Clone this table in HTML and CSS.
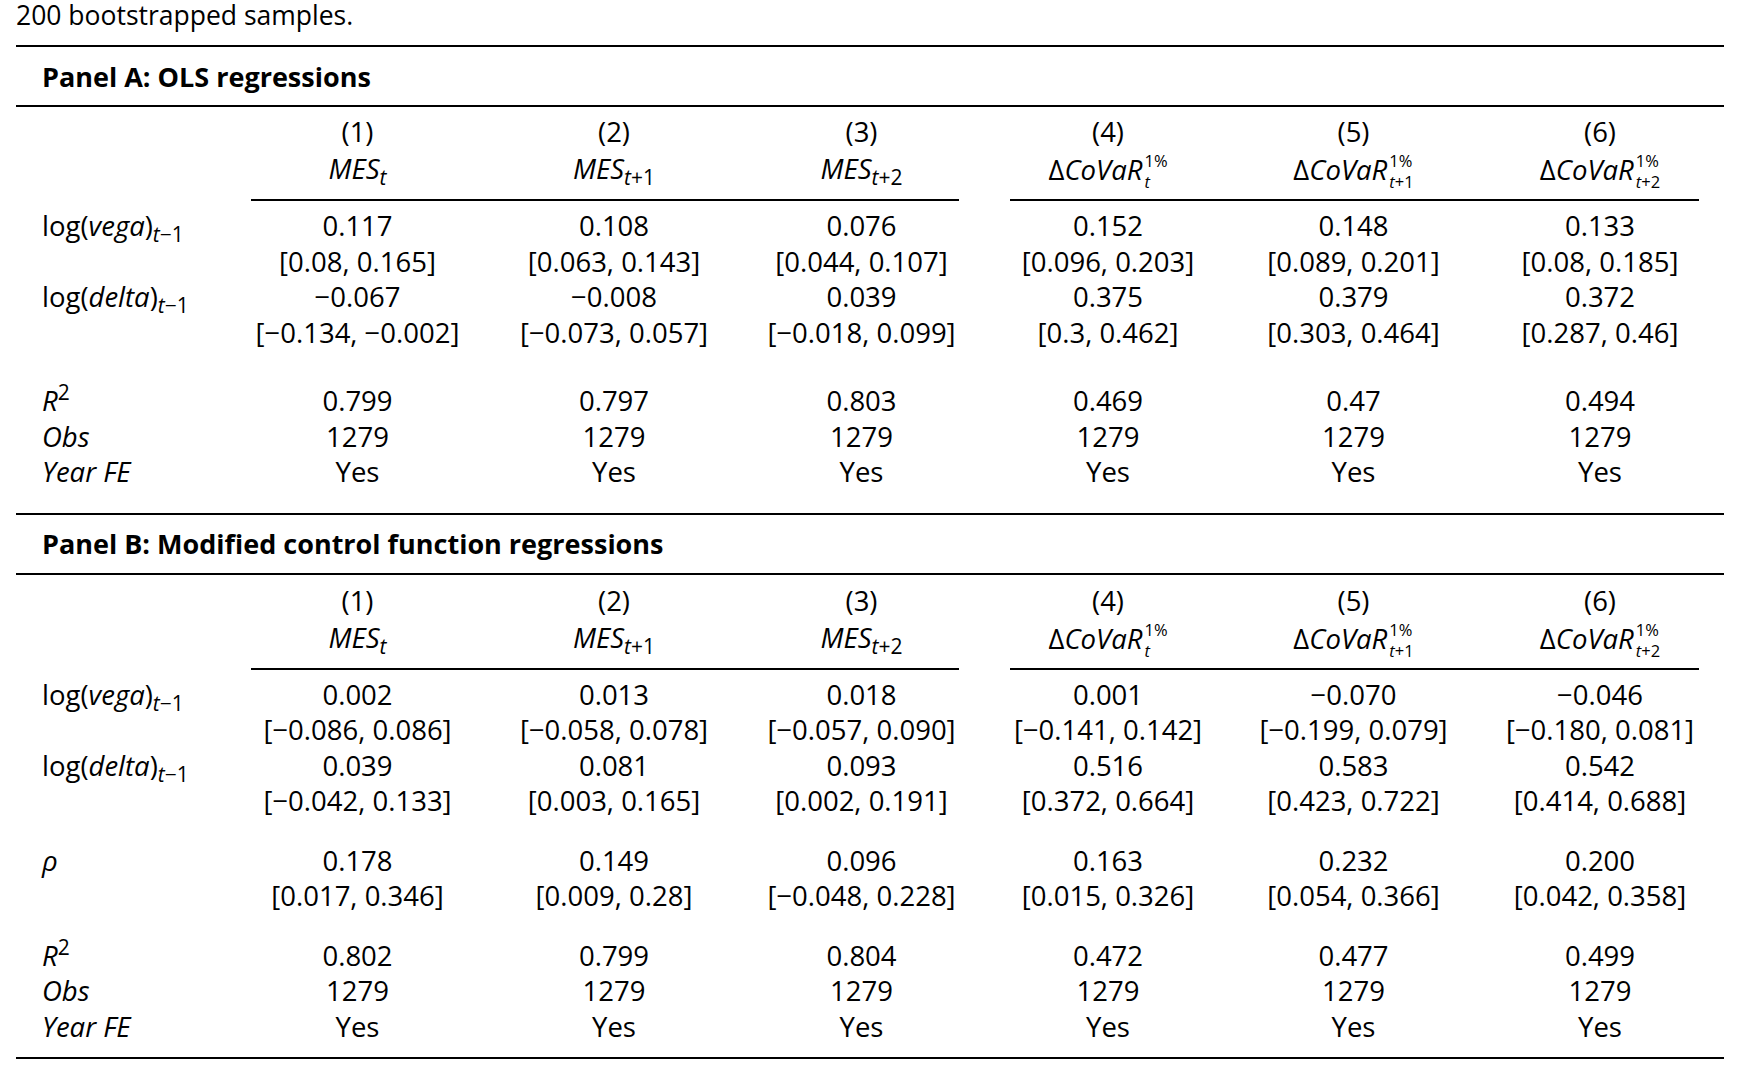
FILE: index.html
```html
<!DOCTYPE html>
<html lang="en">
<head>
  <meta charset="UTF-8" />
  <title>Bootstrapped regressions</title>
  <link rel="stylesheet" href="styles.css">
</head>
<body>

<p class="caption">200 bootstrapped samples.</p>

<div class="table">

  <div class="panel">Panel A: OLS regressions</div>
  <div class="block block-a">
    <div class="row head">
      <span></span><span>(1)</span><span>(2)</span><span>(3)</span><span>(4)</span><span>(5)</span><span>(6)</span>
    </div>
    <div class="row head head2">
      <span></span>
      <span><i>MES</i><sub><i>t</i></sub></span>
      <span><i>MES</i><sub><i>t</i>+1</sub></span>
      <span><i>MES</i><sub><i>t</i>+2</sub></span>
      <span>Δ<i>CoVaR</i><span class="ss"><span>1%</span><span><i>t</i></span></span></span>
      <span>Δ<i>CoVaR</i><span class="ss"><span>1%</span><span><i>t</i>+1</span></span></span>
      <span>Δ<i>CoVaR</i><span class="ss"><span>1%</span><span><i>t</i>+2</span></span></span>
    </div>
    <div class="cmid"><span class="g1"></span><span class="g2"></span></div>

    <div class="row first">
      <span class="lbl">log(<i>vega</i>)<sub><i>t</i>−1</sub></span>
      <span>0.117</span><span>0.108</span><span>0.076</span><span>0.152</span><span>0.148</span><span>0.133</span>
    </div>
    <div class="row">
      <span></span>
      <span>[0.08, 0.165]</span><span>[0.063, 0.143]</span><span>[0.044, 0.107]</span><span>[0.096, 0.203]</span><span>[0.089, 0.201]</span><span>[0.08, 0.185]</span>
    </div>
    <div class="row">
      <span class="lbl">log(<i>delta</i>)<sub><i>t</i>−1</sub></span>
      <span>−0.067</span><span>−0.008</span><span>0.039</span><span>0.375</span><span>0.379</span><span>0.372</span>
    </div>
    <div class="row">
      <span></span>
      <span>[−0.134, −0.002]</span><span>[−0.073, 0.057]</span><span>[−0.018, 0.099]</span><span>[0.3, 0.462]</span><span>[0.303, 0.464]</span><span>[0.287, 0.46]</span>
    </div>

    <div class="gap-a"></div>
    <div class="row">
      <span class="lbl"><i>R</i><sup>2</sup></span>
      <span>0.799</span><span>0.797</span><span>0.803</span><span>0.469</span><span>0.47</span><span>0.494</span>
    </div>
    <div class="row">
      <span class="lbl"><i>Obs</i></span>
      <span>1279</span><span>1279</span><span>1279</span><span>1279</span><span>1279</span><span>1279</span>
    </div>
    <div class="row">
      <span class="lbl"><i>Year FE</i></span>
      <span>Yes</span><span>Yes</span><span>Yes</span><span>Yes</span><span>Yes</span><span>Yes</span>
    </div>
  </div>

  <div class="panel">Panel B: Modified control function regressions</div>
  <div class="block block-b">
    <div class="row head">
      <span></span><span>(1)</span><span>(2)</span><span>(3)</span><span>(4)</span><span>(5)</span><span>(6)</span>
    </div>
    <div class="row head head2">
      <span></span>
      <span><i>MES</i><sub><i>t</i></sub></span>
      <span><i>MES</i><sub><i>t</i>+1</sub></span>
      <span><i>MES</i><sub><i>t</i>+2</sub></span>
      <span>Δ<i>CoVaR</i><span class="ss"><span>1%</span><span><i>t</i></span></span></span>
      <span>Δ<i>CoVaR</i><span class="ss"><span>1%</span><span><i>t</i>+1</span></span></span>
      <span>Δ<i>CoVaR</i><span class="ss"><span>1%</span><span><i>t</i>+2</span></span></span>
    </div>
    <div class="cmid"><span class="g1"></span><span class="g2"></span></div>

    <div class="row first">
      <span class="lbl">log(<i>vega</i>)<sub><i>t</i>−1</sub></span>
      <span>0.002</span><span>0.013</span><span>0.018</span><span>0.001</span><span>−0.070</span><span>−0.046</span>
    </div>
    <div class="row">
      <span></span>
      <span>[−0.086, 0.086]</span><span>[−0.058, 0.078]</span><span>[−0.057, 0.090]</span><span>[−0.141, 0.142]</span><span>[−0.199, 0.079]</span><span>[−0.180, 0.081]</span>
    </div>
    <div class="row">
      <span class="lbl">log(<i>delta</i>)<sub><i>t</i>−1</sub></span>
      <span>0.039</span><span>0.081</span><span>0.093</span><span>0.516</span><span>0.583</span><span>0.542</span>
    </div>
    <div class="row">
      <span></span>
      <span>[−0.042, 0.133]</span><span>[0.003, 0.165]</span><span>[0.002, 0.191]</span><span>[0.372, 0.664]</span><span>[0.423, 0.722]</span><span>[0.414, 0.688]</span>
    </div>

    <div class="gap-b"></div>
    <div class="row">
      <span class="lbl"><i>ρ</i></span>
      <span>0.178</span><span>0.149</span><span>0.096</span><span>0.163</span><span>0.232</span><span>0.200</span>
    </div>
    <div class="row">
      <span></span>
      <span>[0.017, 0.346]</span><span>[0.009, 0.28]</span><span>[−0.048, 0.228]</span><span>[0.015, 0.326]</span><span>[0.054, 0.366]</span><span>[0.042, 0.358]</span>
    </div>

    <div class="gap-b"></div>
    <div class="row">
      <span class="lbl"><i>R</i><sup>2</sup></span>
      <span>0.802</span><span>0.799</span><span>0.804</span><span>0.472</span><span>0.477</span><span>0.499</span>
    </div>
    <div class="row">
      <span class="lbl"><i>Obs</i></span>
      <span>1279</span><span>1279</span><span>1279</span><span>1279</span><span>1279</span><span>1279</span>
    </div>
    <div class="row">
      <span class="lbl"><i>Year FE</i></span>
      <span>Yes</span><span>Yes</span><span>Yes</span><span>Yes</span><span>Yes</span><span>Yes</span>
    </div>
  </div>

</div>

</body>
</html>
```

FILE: styles.css
```css
body {
  margin: 0;
  font-family: "Open Sans", "Noto Sans", sans-serif;
  font-size: 27.5px;
  color: #000;
  background-color: #fff;
}
.caption {
  margin: 0;
  padding-left: 16px;
  font-size: 26.5px;
  line-height: 31px;
}
.table {
  margin: 14px 17px 0 16px;
  border-top: 2px solid #000;
  border-bottom: 2px solid #000;
}
.panel {
  height: 58px;
  display: flex;
  align-items: center;
  padding-left: 26px;
  font-size: 27px;
  font-weight: bold;
  border-bottom: 2px solid #000;
}
.block-a {
  padding: 7px 0 23px;
  border-bottom: 2px solid #000;
}
.block-b {
  padding: 8px 0 13px;
}
.row,
.cmid {
  display: grid;
  grid-template-columns: 235px 213px 300px 195px 51px 196px 295px 198px 25px;
}
.row {
  height: 35.5px;
  line-height: 35.5px;
  text-align: center;
  white-space: nowrap;
}
.row > :nth-child(5) {
  grid-column: 6;
}
.row .lbl {
  text-align: left;
  padding-left: 26px;
}
.head {
  height: 36px;
  line-height: 36px;
}
.head2 {
  height: 37px;
  line-height: 37px;
}
.cmid {
  margin-top: 12px;
  margin-bottom: 7px;
}
.cmid span {
  border-top: 2px solid #000;
}
.cmid .g1 {
  grid-column: 2 / 5;
}
.cmid .g2 {
  grid-column: 6 / 9;
}
.gap-a {
  height: 33px;
}
.gap-b {
  height: 24px;
}
sub,
sup {
  font-size: 21px;
  line-height: 0;
}
sub {
  vertical-align: -6px;
}
sup {
  vertical-align: 11px;
}
.ss {
  display: inline-flex;
  flex-direction: column;
  align-items: flex-start;
  font-size: 16.5px;
  line-height: 21px;
  vertical-align: 13px;
  margin-left: 2px;
}
```
